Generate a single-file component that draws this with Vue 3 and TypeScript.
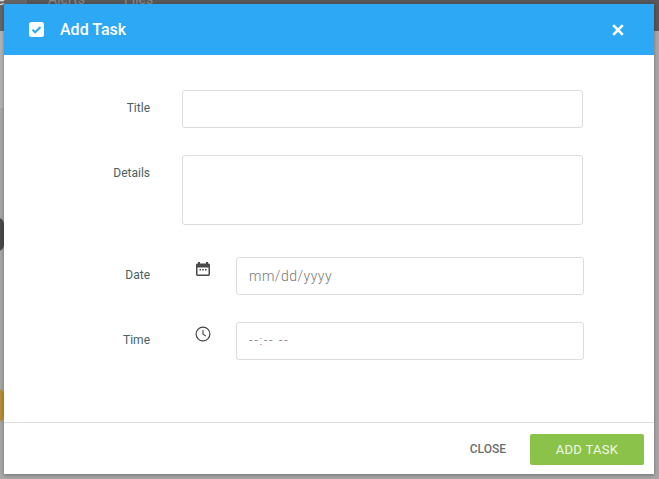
<script setup lang="ts">
interface Tab { label: string }
const tabs: Tab[] = [{ label: 'e' }, { label: 'Alerts' }, { label: 'Files' }]
</script>

<template>
  <div class="page">
    <div class="topbar">
      <span class="tab first">{{ tabs[0].label }}</span>
      <span class="tab alerts">{{ tabs[1].label }}</span>
      <span class="tab files">{{ tabs[2].label }}</span>
    </div>
    <div class="band"></div>
    <div class="side-dark"></div>
    <div class="side-gold"></div>

    <div class="modal">
      <header class="head">
        <svg class="check" width="15" height="15" viewBox="0 0 15 15">
          <rect x="0" y="0" width="15" height="15" rx="2.500" fill="#fff" />
          <path d="M3.500 7.700 6.200 10.300 11.500 5" fill="none" stroke="#2ca8f5" stroke-width="2" />
        </svg>
        <h1 class="title">Add Task</h1>
        <svg class="close-x" width="12" height="12" viewBox="0 0 12 12">
          <path d="M1.200 1.200 10.800 10.800M10.800 1.200 1.200 10.800" stroke="#fff" stroke-width="2.600" fill="none" />
        </svg>
      </header>

      <div class="body">
        <div class="row row-title">
          <label class="lbl">Title</label>
          <input class="field wide" type="text" />
        </div>
        <div class="row row-details">
          <label class="lbl lbl-top">Details</label>
          <textarea class="field wide area"></textarea>
        </div>
        <div class="row row-date">
          <label class="lbl">Date</label>
          <span class="ico">
            <svg width="16" height="16" viewBox="0 0 16 16">
              <path fill="#4a4a4a" d="M3 1h2v1.500h6V1h2v1.500h.6c.8 0 1.400.6 1.400 1.400v9.700c0 .8-.6 1.400-1.400 1.400H2.400c-.8 0-1.400-.6-1.400-1.400V3.900c0-.8.6-1.400 1.400-1.400H3zM2.500 6.500v7h11v-7z" />
              <rect x="4.500" y="8" width="1.500" height="1.500" fill="#4a4a4a" />
              <rect x="7.250" y="8" width="1.500" height="1.500" fill="#4a4a4a" />
              <rect x="10" y="8" width="1.500" height="1.500" fill="#4a4a4a" />
            </svg>
          </span>
          <div class="field short ph">mm/dd/yyyy</div>
        </div>
        <div class="row row-time">
          <label class="lbl">Time</label>
          <span class="ico">
            <svg width="16" height="16" viewBox="0 0 16 16">
              <circle cx="8" cy="8" r="6.900" fill="none" stroke="#444" stroke-width="1.200" />
              <path d="M8 4v4.300l3 1.800" fill="none" stroke="#444" stroke-width="1.100" />
            </svg>
          </span>
          <div class="field short time">--:-- --</div>
        </div>
      </div>

      <footer class="foot">
        <button class="btn-close" type="button">CLOSE</button>
        <button class="btn-add" type="button">ADD TASK</button>
      </footer>
    </div>
  </div>
</template>

<style>
html, body { margin: 0; padding: 0; overflow: hidden; }
</style>

<style scoped>
.page {
  position: relative;
  width: 659px;
  height: 479px;
  overflow: hidden;
  background: #a8a8a8;
  font-family: Roboto, "Liberation Sans", sans-serif;
}
.topbar {
  position: absolute;
  inset: 0 0 auto 0;
  height: 31px;
  background: #585858;
}
.tab { position: absolute; top: -9px; font-size: 14px; color: #8a8a8a; line-height: 16px; }
.first { left: 0; top: 0; width: 27px; height: 31px; background: #666; color: #ddd; line-height: 0; text-indent: -3px; }
.alerts { left: 48px; }
.files { left: 124px; }
.band {
  position: absolute;
  left: 0;
  top: 31px;
  width: 4px;
  height: 77px;
  background: #b4b4b4;
}
.side-dark {
  position: absolute;
  left: -20px;
  top: 218px;
  width: 24px;
  height: 33px;
  border-radius: 6px;
  background: #4a4a4a;
}
.side-gold {
  position: absolute;
  left: -20px;
  top: 389px;
  width: 24px;
  height: 33px;
  border-radius: 6px;
  background: #b88e37;
}
.modal {
  position: absolute;
  left: 4px;
  top: 4px;
  width: 650px;
  height: 470px;
  background: #fff;
  display: flex;
  flex-direction: column;
  box-shadow: 0 1px 4px rgba(0, 0, 0, 0.35);
}
.head {
  height: 51px;
  flex: none;
  background: #2ca8f5;
  display: flex;
  align-items: center;
  padding: 0 30px 0 25px;
  color: #fff;
}
.title {
  margin: 0 0 0 16px;
  font-size: 16px;
  font-weight: 500;
  flex: 1;
}
.body {
  flex: 1;
  display: flex;
  flex-direction: column;
  padding-top: 35px;
}
.row { display: flex; align-items: center; }
.row-details { margin-top: 27px; align-items: flex-start; }
.row-date { margin-top: 32px; }
.row-time { margin-top: 27px; }
.lbl {
  width: 146px;
  text-align: right;
  font-size: 12px;
  color: #47625f;
  flex: none;
  margin-top: -2px;
}
.lbl-top { margin-top: 0; padding-top: 11px; }
.field {
  box-sizing: border-box;
  border: 1px solid #ddd;
  border-radius: 3px;
  background: #fff;
  height: 38px;
  outline: none;
  margin: 0;
  display: block;
}
.wide { width: 401px; margin-left: 32px; }
.area { height: 70px; resize: none; }
.ico {
  width: 16px;
  height: 16px;
  margin-left: 45px;
  margin-top: -14px;
  flex: none;
}
.ico svg { display: block; }
.short {
  width: 348px;
  margin-left: 25px;
  padding-left: 12px;
  line-height: 36px;
  color: #8a8a8a;
}
.ph { font-size: 14px; font-weight: 300; letter-spacing: 0.5px; color: #777; }
.time { font-size: 13px; font-weight: 300; letter-spacing: 1.500px; color: #666; }
.foot {
  height: 52px;
  flex: none;
  box-sizing: border-box;
  border-top: 1px solid #ddd;
  display: flex;
  align-items: center;
  justify-content: flex-end;
  padding-right: 10px;
  padding-top: 1px;
}
.btn-close {
  background: none;
  border: 0;
  padding: 0;
  font: 500 12px Roboto, sans-serif;
  color: #6e6e6e;
  margin-right: 24px;
}
.btn-add {
  width: 114px;
  height: 31px;
  border: 0;
  border-radius: 2px;
  background: #8bc34a;
  color: #f1f8e9;
  font: 400 13px Roboto, sans-serif;
  letter-spacing: 0.300px;
}
</style>
